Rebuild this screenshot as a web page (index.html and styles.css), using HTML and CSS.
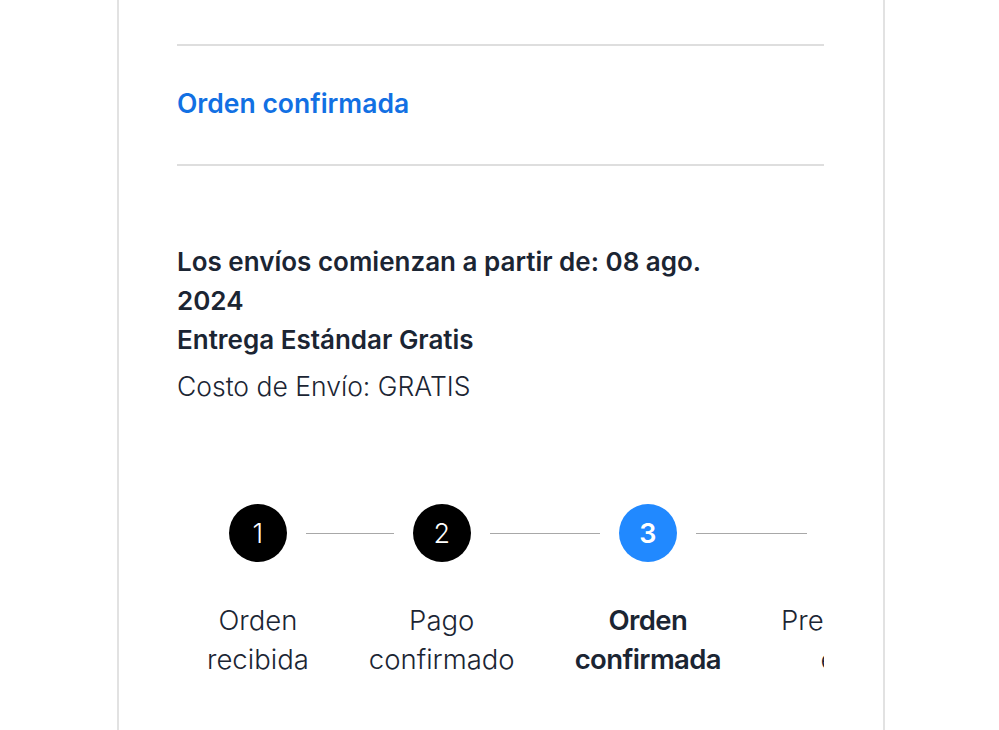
FILE: index.html
```html
<!DOCTYPE html>
<html lang="es">
<head>
  <meta charset="UTF-8">
  <title>Orden confirmada</title>
  <link rel="stylesheet" href="styles.css">
</head>
<body>
  <div class="card">
    <div class="status">
      <a href="#" class="status-link">Orden confirmada</a>
    </div>

    <div class="shipping">
      <p class="shipping-title">Los envíos comienzan a partir de: 08 ago. 2024</p>
      <p class="shipping-title">Entrega Estándar Gratis</p>
      <p class="shipping-cost">Costo de Envío: GRATIS</p>
    </div>

    <div class="stepper">
      <div class="step done">
        <div class="step-head"><span class="step-num">1</span></div>
        <div class="step-label">Orden<br>recibida</div>
      </div>
      <div class="step done">
        <div class="step-head"><span class="step-num">2</span></div>
        <div class="step-label">Pago<br>confirmado</div>
      </div>
      <div class="step current">
        <div class="step-head"><span class="step-num">3</span></div>
        <div class="step-label">Orden<br>confirmada</div>
      </div>
      <div class="step">
        <div class="step-head"><span class="step-num">4</span></div>
        <div class="step-label">Preparando<br>envío</div>
      </div>
      <div class="step">
        <div class="step-head"><span class="step-num">5</span></div>
        <div class="step-label">Orden<br>enviada</div>
      </div>
    </div>
  </div>
</body>
</html>
```

FILE: styles.css
```css
body {
  margin: 0;
  font-family: Inter, Roboto, sans-serif;
  background: #fff;
  color: #1b2533;
}

.card {
  margin-left: 117px;
  width: 647px;
  min-height: 100vh;
  padding: 44px 59px 0 58px;
  border-left: 2px solid #e2e2e2;
  border-right: 2px solid #e2e2e2;
}

.status {
  border-top: 2px solid #dedede;
  border-bottom: 2px solid #dedede;
  padding: 39px 0;
  line-height: 36px;
}

.status-link {
  color: #1270e3;
  font-size: 26.5px;
  font-weight: 600;
  text-decoration: none;
}

.shipping {
  margin-top: 76px;
  max-width: 580px;
}

.shipping p {
  margin: 0;
}

.shipping-title {
  font-size: 26px;
  font-weight: 560;
  line-height: 39px;
}

.shipping-cost {
  margin-top: 8px !important;
  font-size: 26.5px;
  font-weight: 300;
  line-height: 39px;
}

.stepper {
  display: flex;
  margin-top: 98px;
  overflow: hidden;
}

.step {
  flex-shrink: 0;
  display: flex;
  flex-direction: column;
  align-items: center;
  padding: 0 30px;
}

.step-head {
  display: flex;
  align-items: center;
  align-self: stretch;
  margin: 0 -30px;
}

.step-head::before,
.step-head::after {
  content: "";
  flex: 1;
  height: 1px;
  background: #a8a8a8;
}

.step-head::before {
  margin-right: 19px;
}

.step-head::after {
  margin-left: 19px;
}

.step:first-child .step-head::before,
.step:last-child .step-head::after {
  visibility: hidden;
}

.step-num {
  width: 58px;
  height: 58px;
  border-radius: 50%;
  display: flex;
  align-items: center;
  justify-content: center;
  font-size: 27px;
  font-weight: 300;
  color: #fff;
  background: #c8c8c8;
}

.step.done .step-num {
  background: #000;
}

.step.current .step-num {
  background: #2189ff;
  font-weight: 600;
}

.step-label {
  margin-top: 39px;
  font-size: 27.5px;
  font-weight: 300;
  line-height: 39px;
  text-align: center;
}

.step.current .step-label {
  font-weight: 600;
  letter-spacing: -0.6px;
}
```
